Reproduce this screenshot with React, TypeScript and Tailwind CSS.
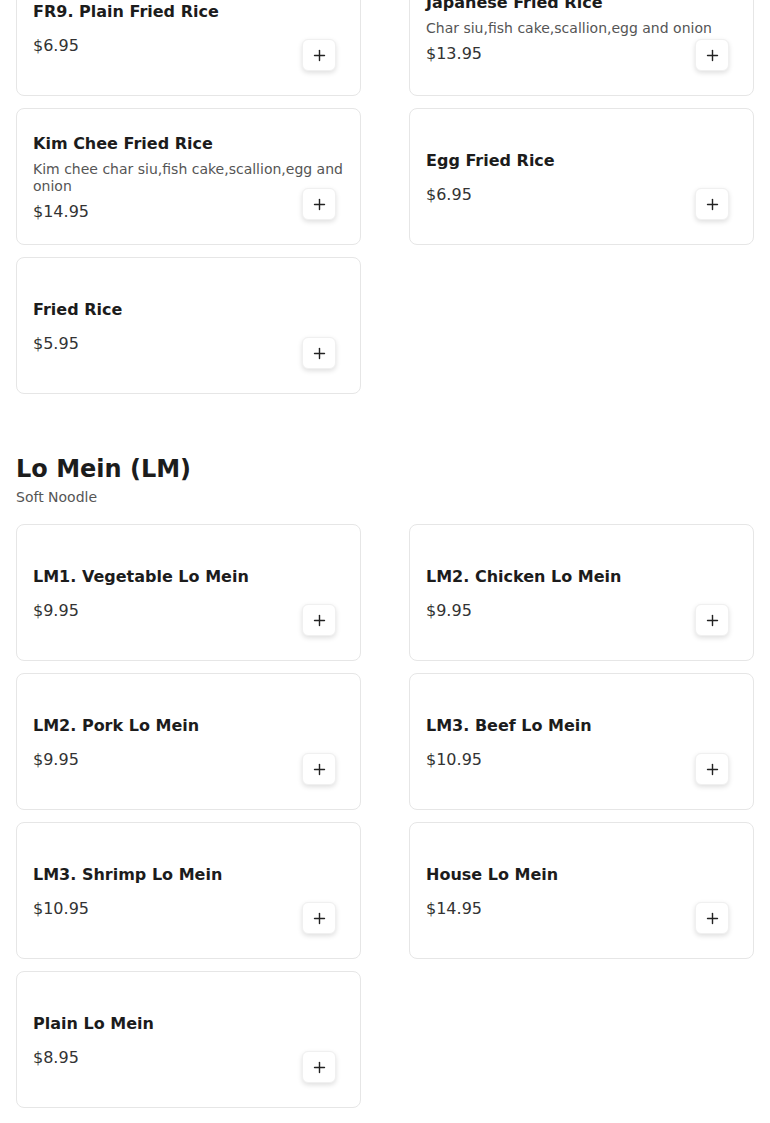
import { Plus } from "lucide-react";

type Item = {
    name: string;
    desc?: string;
    price: string;
};

const friedRice: Item[] = [
    { name: "FR9. Plain Fried Rice", price: "$6.95" },
    { name: "Japanese Fried Rice", desc: "Char siu,fish cake,scallion,egg and onion", price: "$13.95" },
    { name: "Kim Chee Fried Rice", desc: "Kim chee char siu,fish cake,scallion,egg and onion", price: "$14.95" },
    { name: "Egg Fried Rice", price: "$6.95" },
    { name: "Fried Rice", price: "$5.95" },
];

const loMein: Item[] = [
    { name: "LM1. Vegetable Lo Mein", price: "$9.95" },
    { name: "LM2. Chicken Lo Mein", price: "$9.95" },
    { name: "LM2. Pork Lo Mein", price: "$9.95" },
    { name: "LM3. Beef Lo Mein", price: "$10.95" },
    { name: "LM3. Shrimp Lo Mein", price: "$10.95" },
    { name: "House Lo Mein", price: "$14.95" },
    { name: "Plain Lo Mein", price: "$8.95" },
];

function MenuCard({ item }: { item: Item }) {
    return (
        <div className="relative flex h-[137px] items-center rounded-lg border border-[#e6e6e6] bg-white px-4">
            <div className="w-full pt-[2px]">
                <h3 className="text-base leading-6 font-bold text-[#1c1c1c]">{item.name}</h3>
                {item.desc && (
                    <p className="mt-[5px] text-sm leading-[17px] text-[#555555]">{item.desc}</p>
                )}
                <p className={`${item.desc ? "mt-[5px]" : "mt-[10px]"} text-base leading-6 text-[#333333]`}>
                    {item.price}
                </p>
            </div>
            <button className="absolute right-6 bottom-6 flex h-8 w-[34px] items-center justify-center rounded-md border border-[#f0f0f0] bg-white text-[#222222] shadow-[0_2px_5px_rgba(0,0,0,0.13)]">
                <Plus size={17} strokeWidth={2} />
            </button>
        </div>
    );
}

function Grid({ items }: { items: Item[] }) {
    return (
        <div className="grid grid-cols-2 gap-x-12 gap-y-3">
            {items.map((item, i) => (
                <MenuCard key={i} item={item} />
            ))}
        </div>
    );
}

export default function App() {
    return (
        <div className="min-h-[1123px] bg-white px-4 pb-4 font-['DejaVu_Sans',sans-serif]">
            <div className="-mt-[41px]">
                <Grid items={friedRice} />
            </div>

            <section className="mt-[59px]">
                <h2 className="text-2xl leading-8 font-bold text-[#1c1c1c]">Lo Mein (LM)</h2>
                <p className="mt-[2px] text-sm leading-5 text-[#555555]">Soft Noodle</p>
                <div className="mt-[17px]">
                    <Grid items={loMein} />
                </div>
            </section>
        </div>
    );
}
